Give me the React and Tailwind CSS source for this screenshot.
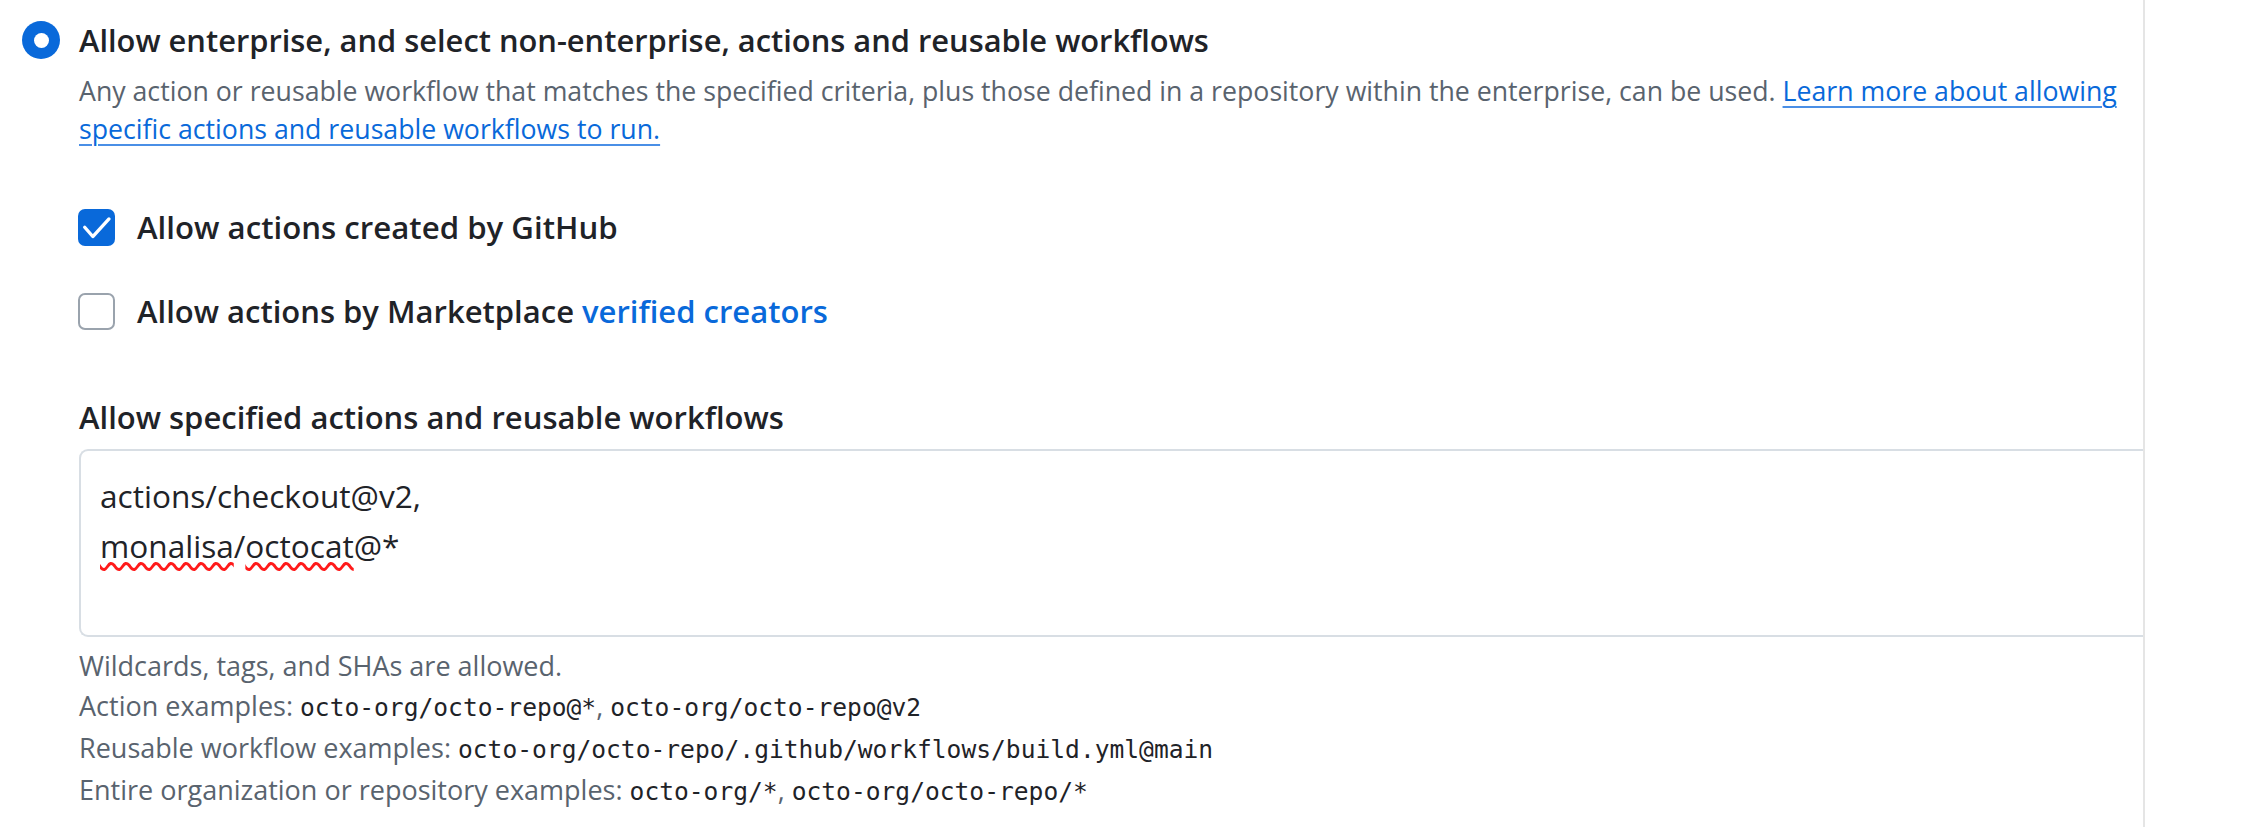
export default function App() {
  const mono = "font-['DejaVu_Sans_Mono',monospace] text-[#1f2328] text-[24.6px]";
  const squiggle = "underline decoration-wavy decoration-[#ff1a1a] decoration-[2.5px] underline-offset-[4px]";
  return (
    <div className="w-[2256px] h-[827px] bg-white overflow-hidden font-['Open_Sans',sans-serif]">
      <div className="w-[2145px] h-full border-r-2 border-[#e5e5e5] pt-[18px] flex">
        <div className="ml-[22px] h-[44px] flex items-center shrink-0">
          <div className="w-[38px] h-[38px] rounded-full bg-[#0969da] flex items-center justify-center">
            <div className="w-[15px] h-[15px] rounded-full bg-white" />
          </div>
        </div>
        <div className="ml-[19px] flex-1 flex flex-col min-w-0">
          <div className="h-[44px] leading-[44px] text-[30.85px] font-semibold text-[#1f2328] whitespace-nowrap">
            Allow enterprise, and select non-enterprise, actions and reusable workflows
          </div>
          <p className="mt-[10px] text-[26.7px] leading-[37.5px] text-[#59636e] whitespace-nowrap">
            Any action or reusable workflow that matches the specified criteria, plus those defined in a repository within the enterprise, can be used.{" "}
            <a className="text-[#0969da] underline decoration-2 decoration-[#4a8fe6] underline-offset-[5px]">
              Learn more about allowing
              <br />
              specific actions and reusable workflows to run.
            </a>
          </p>

          <div className="mt-[60px] h-[40px] flex items-center -ml-[1px]">
            <div className="w-[37px] h-[37px] rounded-[7px] bg-[#0969da] flex items-center justify-center shrink-0">
              <svg viewBox="0 0 16 16" className="w-[37px] h-[37px]">
                <path d="M2.9 7.9 L6.4 11.9 L13.4 4.3" fill="none" stroke="white" strokeWidth="1.45" strokeLinecap="round" strokeLinejoin="round" />
              </svg>
            </div>
            <span className="ml-[22px] text-[31.2px] font-semibold text-[#1f2328] leading-[40px] whitespace-nowrap">
              Allow actions created by GitHub
            </span>
          </div>

          <div className="mt-[44px] h-[40px] flex items-center -ml-[1px]">
            <div className="w-[37px] h-[37px] rounded-[7px] bg-white border-2 border-[#9aa3ad] shrink-0" />
            <span className="ml-[22px] text-[31px] font-semibold text-[#1f2328] leading-[40px] whitespace-nowrap">
              Allow actions by Marketplace{" "}
              <a className="text-[#0969da]">verified creators</a>
            </span>
          </div>

          <div className="mt-[64px] h-[44px] leading-[44px] text-[31px] font-semibold text-[#1f2328] whitespace-nowrap">
            Allow specified actions and reusable workflows
          </div>

          <div className="mt-[10px] h-[188px] border-2 border-r-0 rounded-l-[9px] border-[#d8dee4] bg-white pl-[19px] pt-[20px] text-[31.6px] leading-[49.5px] text-[#1f2328]">
            <div>actions/checkout@v2,</div>
            <div>
              <span className={squiggle}>monalisa</span>/<span className={squiggle}>octocat</span>@*
            </div>
          </div>

          <div className="mt-[9px] text-[27px] leading-[40px] text-[#59636e] whitespace-nowrap">
            <div>Wildcards, tags, and SHAs are allowed.</div>
            <div>
              Action examples: <span className={mono}>octo-org/octo-repo@*</span>, <span className={mono}>octo-org/octo-repo@v2</span>
            </div>
            <div>
              Reusable workflow examples: <span className={mono}>octo-org/octo-repo/.github/workflows/build.yml@main</span>
            </div>
            <div>
              Entire organization or repository examples: <span className={mono}>octo-org/*</span>, <span className={mono}>octo-org/octo-repo/*</span>
            </div>
          </div>
        </div>
      </div>
    </div>
  );
}
